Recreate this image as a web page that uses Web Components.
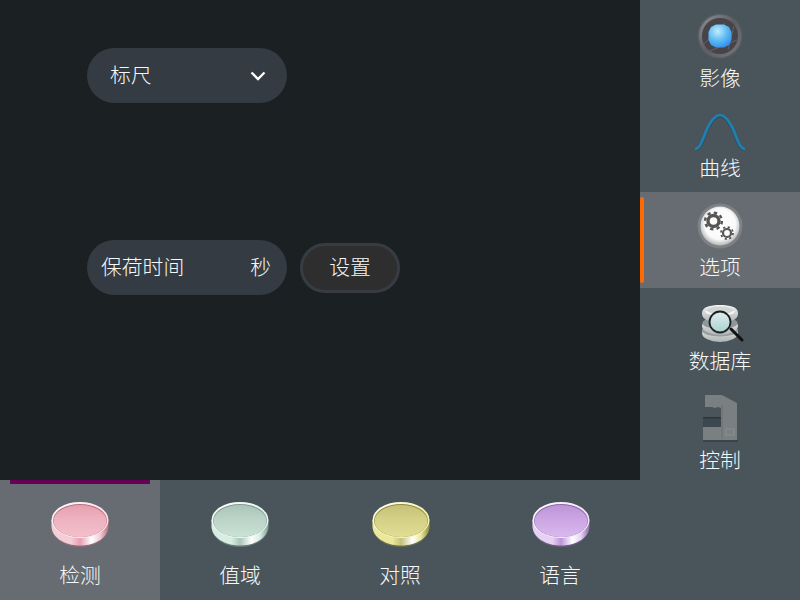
<!DOCTYPE html>
<html lang="zh-CN">
<head>
<meta charset="utf-8">
<title>选项</title>
<style>
html,body{margin:0;padding:0;width:800px;height:600px;overflow:hidden;background:#4a545b}
body{font-family:"Liberation Serif","Noto Sans CJK SC",serif;font-weight:300;color:#f6f8f8}
</style>
</head>
<body>
<app-shell>
  <option-panel slot="main">
    <pill-select>标尺</pill-select>
    <div style="display:flex;align-items:center;gap:13px;margin-top:137px">
      <pill-field label="保荷时间" unit="秒"></pill-field>
      <pill-button>设置</pill-button>
    </div>
  </option-panel>
  <side-item slot="side" icon="lens" pad="13" gap="7">影像</side-item>
  <side-item slot="side" icon="curve" pad="17" gap="5">曲线</side-item>
  <side-item slot="side" icon="gears" pad="11" gap="6" active>选项</side-item>
  <side-item slot="side" icon="db" pad="16" gap="5">数据库</side-item>
  <side-item slot="side" icon="machine" pad="9" gap="5">控制</side-item>
  <tab-item slot="tabs" color="pink" active>检测</tab-item>
  <tab-item slot="tabs" color="green">值域</tab-item>
  <tab-item slot="tabs" color="yellow" nudge>对照</tab-item>
  <tab-item slot="tabs" color="violet" nudge>语言</tab-item>
</app-shell>
<script>
const ICONS={
lens:`<svg width="46" height="46" viewBox="0 0 46 46"><defs>
<radialGradient id="a" cx=".4" cy=".3" r=".8"><stop offset="0" stop-color="#c4ecfb"/><stop offset=".5" stop-color="#5fbcf3"/><stop offset="1" stop-color="#2b86ea"/></radialGradient>
<linearGradient id="r" x1="0" y1="0" x2="1" y2="1"><stop offset="0" stop-color="#8f9196"/><stop offset=".5" stop-color="#5c5d62"/><stop offset="1" stop-color="#77797c"/></linearGradient></defs>
<circle cx="23" cy="23" r="22.500" fill="#5a5f64"/><circle cx="23" cy="23" r="21" fill="url(#r)"/><circle cx="23" cy="23" r="18" fill="#464448"/>
<path d="M7 31L28 10M13 38L40 27M37 13L31 37" stroke="#646163" stroke-width="1"/>
<polygon points="19,11.500 27,11.500 32,14 34.500,19 34.500,27 32,32 27,34.500 19,34.500 14,32 11.500,27 11.500,19 14,14" fill="url(#a)"/></svg>`,
curve:`<svg width="52" height="38" viewBox="0 0 52 38"><path d="M1 37C5 37 7 32 10.500 23C14 13 20 3 26 3C32 3 38 13 41.500 23C45 32 47 37 51 37" fill="none" stroke="#33505f" stroke-width="3.600"/><path d="M1 36C5 36 7 31 10.500 22C14 12 20 2 26 2C32 2 38 12 41.500 22C45 31 47 36 51 36" fill="none" stroke="#1f80b4" stroke-width="2.600"/></svg>`,
gears:`<svg width="46" height="46" viewBox="0 0 46 46"><defs><radialGradient id="g" cx=".5" cy=".45" r=".55"><stop offset="0" stop-color="#fff"/><stop offset=".72" stop-color="#fafafa"/><stop offset="1" stop-color="#b4b5b6"/></radialGradient></defs>
<circle cx="23" cy="23" r="22.500" fill="#7d8287"/><circle cx="23" cy="23" r="19.500" fill="url(#g)"/>
<circle cx="16.500" cy="18" r="5.500" fill="none" stroke="#555" stroke-width="3.400"/><circle cx="16.500" cy="18" r="8.400" fill="none" stroke="#555" stroke-width="2.400" stroke-dasharray="3.400 3.200"/>
<circle cx="30" cy="30" r="4" fill="none" stroke="#555" stroke-width="2.200"/><circle cx="30" cy="30" r="6" fill="none" stroke="#555" stroke-width="1.800" stroke-dasharray="2.200 2.510"/></svg>`,
db:`<svg width="48" height="40" viewBox="0 0 48 40"><defs><linearGradient id="d" x1="0" y1="0" x2="0" y2="1"><stop offset="0" stop-color="#f4f5f5"/><stop offset="1" stop-color="#aeb3b4"/></linearGradient><linearGradient id="l" x1="0" y1="0" x2="0" y2="1"><stop offset="0" stop-color="#dfeeee"/><stop offset="1" stop-color="#a8d2d0"/></linearGradient></defs>
<ellipse cx="24" cy="29" rx="18" ry="9" fill="url(#d)"/><ellipse cx="24" cy="26.500" rx="18" ry="6" fill="#979ea0"/>
<ellipse cx="24" cy="22" rx="18" ry="9" fill="url(#d)"/><ellipse cx="24" cy="19" rx="17.500" ry="6" fill="#8f9698"/>
<path d="M6 9C6 3 14 1 24 1s18 2 18 8c0 5-3 9-18 9S6 14 6 9z" fill="url(#d)"/><ellipse cx="24" cy="7" rx="14" ry="4.500" fill="#d2d5d6"/><path d="M10 7c2 5 26 5 28 0" fill="none" stroke="#f8f8f8" stroke-width="2"/>
<path d="M35 25L46 36" stroke="#111" stroke-width="3" stroke-linecap="round"/><circle cx="24" cy="18" r="10.500" fill="url(#l)" stroke="#1d2021" stroke-width="1.800"/></svg>`,
machine:`<svg width="40" height="50" viewBox="0 0 40 50"><path d="M5 2H22L37 10V47H3V24H21V15L18 14L15 15L12 14H5Z" fill="#7a8081"/><rect x="3" y="24" width="18" height="10" fill="#3c4750"/><rect x="3" y="24" width="18" height="1.500" fill="#2f353a"/><path d="M22 12V46" stroke="#6a7071"/><rect x="26" y="36" width="8" height="6" fill="none" stroke="#8a9091"/><rect x="3" y="47" width="35" height="2" fill="#3c4349"/></svg>`
};
const DISC={
pink:{rim:'#fbe4ea',top:'#e79fb1',bot:'#f3c0cc',mid:'#eeb4c2',d:'#b9707f',s:'#f3cdd7'},
green:{rim:'#e6f5ee',top:'#aac6b8',bot:'#cbe2d7',mid:'#bdd6c9',d:'#7f9c8f',s:'#d8ede4'},
yellow:{rim:'#f7f4b0',top:'#c5c17a',bot:'#e2dd95',mid:'#d6d288',d:'#8f8c3f',s:'#ebe89c'},
violet:{rim:'#f2e4fb',top:'#bd94d8',bot:'#d9b9ee',mid:'#cda8e4',d:'#8b68a5',s:'#e5d2f3'}
};
function sheet(host,css,html){const r=host.attachShadow({mode:'open'});r.innerHTML=`<style>${css}</style>${html}`;return r}
customElements.define('app-shell',class extends HTMLElement{constructor(){super();sheet(this,
`:host{display:grid;grid-template-columns:640px 160px;grid-template-rows:480px 120px;width:800px;height:600px;background:#4a545b;position:relative}
.main{background:#1b2023;min-width:0}.side{display:flex;flex-direction:column}.tabs{grid-column:1/3;display:flex}
.mark{position:absolute;left:10px;top:480px;width:140px;height:4px;background:#650055;border-radius:0 0 1px 1px;z-index:1}`,
`<div class="main"><slot name="main"></slot></div><div class="side"><slot name="side"></slot></div><div class="tabs"><slot name="tabs"></slot></div><div class="mark"></div>`)}});
customElements.define('option-panel',class extends HTMLElement{constructor(){super();sheet(this,
`:host{display:flex;flex-direction:column;align-items:flex-start;padding:48px 0 0 87px;font-size:20.8px;line-height:28px}`,`<slot></slot>`)}});
customElements.define('pill-select',class extends HTMLElement{constructor(){super();sheet(this,
`:host{display:flex;align-items:center;justify-content:space-between;box-sizing:border-box;width:200px;height:55px;padding:0 21px 0 23px;border-radius:28px;background:#343b43}
svg{display:block}`,`<slot></slot><svg width="16" height="12" viewBox="0 0 16 12"><path d="M1.500 2.500L8 9L14.500 2.500" fill="none" stroke="#fff" stroke-width="2.300"/></svg>`)}});
customElements.define('pill-field',class extends HTMLElement{constructor(){super();const l=this.getAttribute('label'),u=this.getAttribute('unit');sheet(this,
`:host{display:flex;align-items:center;justify-content:space-between;box-sizing:border-box;width:200px;height:55px;padding:0 16px 0 14px;border-radius:28px;background:#343b43}`,`<span>${l}</span><span>${u}</span>`)}});
customElements.define('pill-button',class extends HTMLElement{constructor(){super();sheet(this,
`:host{display:flex;align-items:center;justify-content:center;box-sizing:border-box;width:100px;height:50px;border:3px solid #373c42;border-radius:25px;background:#2e2e2f}`,`<slot></slot>`)}});
customElements.define('side-item',class extends HTMLElement{constructor(){super();const p=this.getAttribute('pad'),g=this.getAttribute('gap'),a=this.hasAttribute('active');sheet(this,
`:host{display:flex;flex-direction:column;align-items:center;box-sizing:border-box;height:96px;position:relative;padding-top:${p}px;gap:${g}px;font-size:20.8px;line-height:26px;${a?'background:#666c72;':''}}
svg{display:block}.bar{position:absolute;left:0;top:5px;bottom:5px;width:4px;background:#ff6a00;border-radius:2px}`,
`${a?'<div class="bar"></div>':''}${ICONS[this.getAttribute('icon')]}<slot></slot>`)}});
customElements.define('glass-disc',class extends HTMLElement{constructor(){super();const c=DISC[this.getAttribute('color')];sheet(this,
`:host{display:block;width:60px;height:48px}svg{display:block}`,
`<svg width="60" height="48" viewBox="0 0 60 48"><defs>
<linearGradient id="s" x1="0" y1="0" x2="1" y2="0"><stop offset="0" stop-color="${c.s}"/><stop offset=".35" stop-color="${c.s}"/><stop offset=".5" stop-color="${c.top}"/><stop offset=".7" stop-color="#fff"/><stop offset=".85" stop-color="${c.s}"/><stop offset="1" stop-color="${c.d}"/></linearGradient>
<linearGradient id="f" x1="0" y1="0" x2="0" y2="1"><stop offset="0" stop-color="${c.top}"/><stop offset=".5" stop-color="${c.mid}"/><stop offset=".52" stop-color="${c.mid}"/><stop offset="1" stop-color="${c.bot}"/></linearGradient>
<linearGradient id="b" x1="0" y1="0" x2="1" y2="1"><stop offset="0" stop-color="#fff"/><stop offset=".5" stop-color="${c.rim}"/><stop offset="1" stop-color="${c.rim}"/></linearGradient></defs>
<ellipse cx="30" cy="27" rx="28.500" ry="20" fill="${c.d}" opacity=".5"/>
<path d="M1.500 20V26C1.500 37 14 45.500 30 45.500S58.500 37 58.500 26V20Z" fill="url(#s)"/>
<ellipse cx="30" cy="20" rx="28.500" ry="18" fill="url(#b)"/><ellipse cx="30" cy="20.500" rx="27" ry="16.500" fill="${c.d}"/><ellipse cx="30" cy="21" rx="26.500" ry="16" fill="url(#f)"/></svg>`)}});
customElements.define('tab-item',class extends HTMLElement{constructor(){super();const a=this.hasAttribute('active'),n=this.hasAttribute('nudge');sheet(this,
`:host{display:flex;flex-direction:column;align-items:center;box-sizing:border-box;width:160px;height:120px;padding-top:20px;gap:14px;font-size:20.8px;line-height:28px;${a?'background:#666c72;':''}}
glass-disc{margin-left:${n?2:0}px}`,
`<glass-disc color="${this.getAttribute('color')}"></glass-disc><slot></slot>`)}});
</script>
</body>
</html>
